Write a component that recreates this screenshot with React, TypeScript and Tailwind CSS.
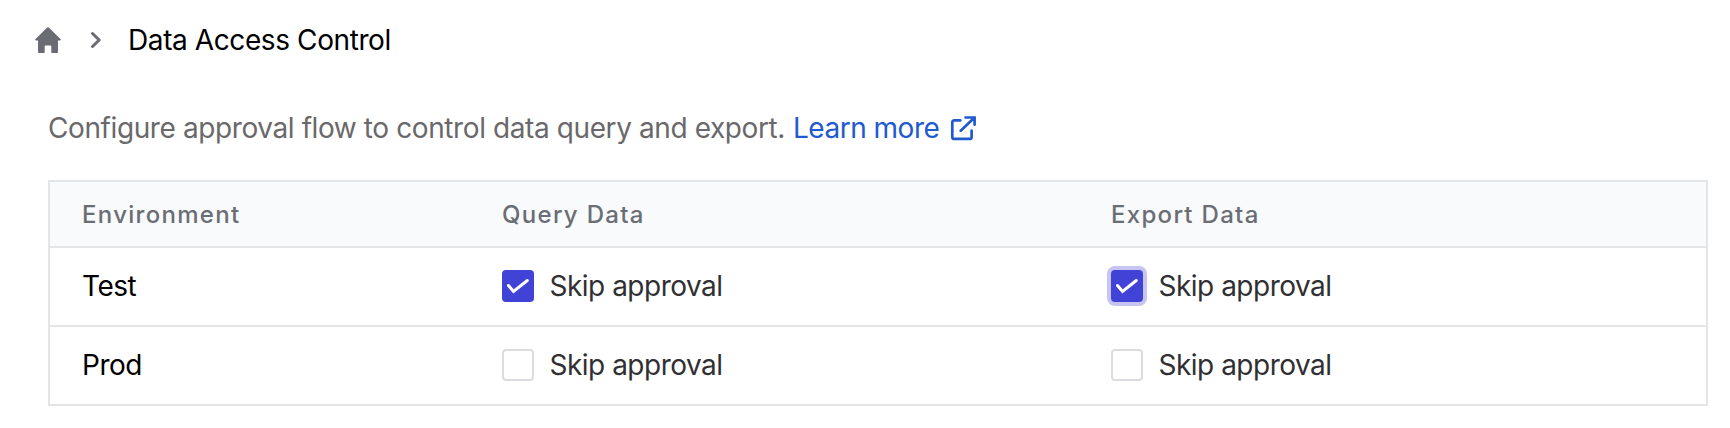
import React from "react";

function HomeIcon() {
  return (
    <svg className="size-8 shrink-0" viewBox="0 0 32 32" fill="#6b6b74">
      <path d="M15.2 3.500a1.200 1.200 0 0 1 1.600 0L28.700 15.200a.8.8 0 0 1-.6 1.300H26v11.200c0 .8-.6 1.300-1.300 1.300h-4.400c-.6 0-1-.4-1-1v-5.700c0-.5-.3-.8-.8-.8h-5c-.5 0-.8.3-.8.8V28c0 .6-.4 1-1 1H7.300c-.7 0-1.300-.5-1.300-1.300V16.500H3.900a.8.8 0 0 1-.6-1.300z" />
    </svg>
  );
}

function ExternalIcon() {
  return (
    <svg className="h-7 w-7 shrink-0" viewBox="0 0 28 28" fill="none" stroke="#2159cf" strokeWidth="2.700" strokeLinecap="round">
      <path d="M11.300 6.400H5.300a2 2 0 0 0-2 2v14.500a2 2 0 0 0 2 2h15.300a2 2 0 0 0 2-2v-6.200M16.500 3.500h9.100v7.200M25.300 3.700 11.700 16.700" />
    </svg>
  );
}

type BoxProps = { checked?: boolean; focused?: boolean };

function Choice({ checked, focused }: BoxProps) {
  return (
    <label className="flex items-center gap-[15.5px] whitespace-nowrap">
      <span
        className={
          "flex size-8 shrink-0 items-center justify-center rounded-[4px] " +
          (checked ? "bg-[#4142d6] " : "border-2 border-[#dcdce0] bg-white ") +
          (focused ? "ring-4 ring-[#c5c4f3]" : "")
        }
      >
        {checked && (
          <svg className="size-8" viewBox="0 0 32 32" fill="none" stroke="white" strokeWidth="3" strokeLinecap="round" strokeLinejoin="miter">
            <path d="M6.500 15.500 11.500 21.500 25.300 10.500" />
          </svg>
        )}
      </span>
      <span className="text-[28px] tracking-[-0.5px] text-[#303033]">Skip approval</span>
    </label>
  );
}

const columns = "grid grid-cols-[420px_609px_1fr] items-center pl-8";

export default function App() {
  return (
    <main className="h-[428px] w-[1730px] bg-white font-['Inter',sans-serif]">
      <nav className="flex h-20 items-center pl-8">
        <HomeIcon />
        <svg className="ml-4 size-8" viewBox="0 0 32 32" fill="none" stroke="#6b6b74" strokeWidth="3" strokeLinecap="round" strokeLinejoin="round">
          <path d="m12.500 9.500 6.700 6.500-6.700 6.500" />
        </svg>
        <span className="ml-4 whitespace-nowrap text-[28px] tracking-[-0.4px] text-black">Data Access Control</span>
      </nav>
      <section className="pl-12">
        <p className="mt-[28px] flex h-10 items-center whitespace-nowrap text-[28px] tracking-[-0.5px] text-[#69696b]">
          <span className="tracking-[-0.4px]">Configure approval flow to control data query and export.</span>
          <a className="ml-2 flex items-center gap-2.5 text-[#2159cf]">
            <span>Learn more</span>
            <ExternalIcon />
          </a>
        </p>
        <div className="mt-8 w-[1660px] border-2 border-[#e3e5e7]">
          <div className={columns + " h-[66px] border-b-2 border-[#e3e5e7] bg-[#f8fafc] pt-0.5 text-[24px] font-medium tracking-[1.3px] text-[#6b6d74]"}>
            <span>Environment</span>
            <span>Query Data</span>
            <span>Export Data</span>
          </div>
          <div className={columns + " h-[79px] border-b-2 border-[#e3e5e7] pb-0.5"}>
            <span className="text-[28px] tracking-[-0.5px]">Test</span>
            <Choice checked />
            <Choice checked focused />
          </div>
          <div className={columns + " h-[77px] pb-0.5"}>
            <span className="text-[28px] tracking-[-0.5px]">Prod</span>
            <Choice />
            <Choice />
          </div>
        </div>
      </section>
    </main>
  );
}
